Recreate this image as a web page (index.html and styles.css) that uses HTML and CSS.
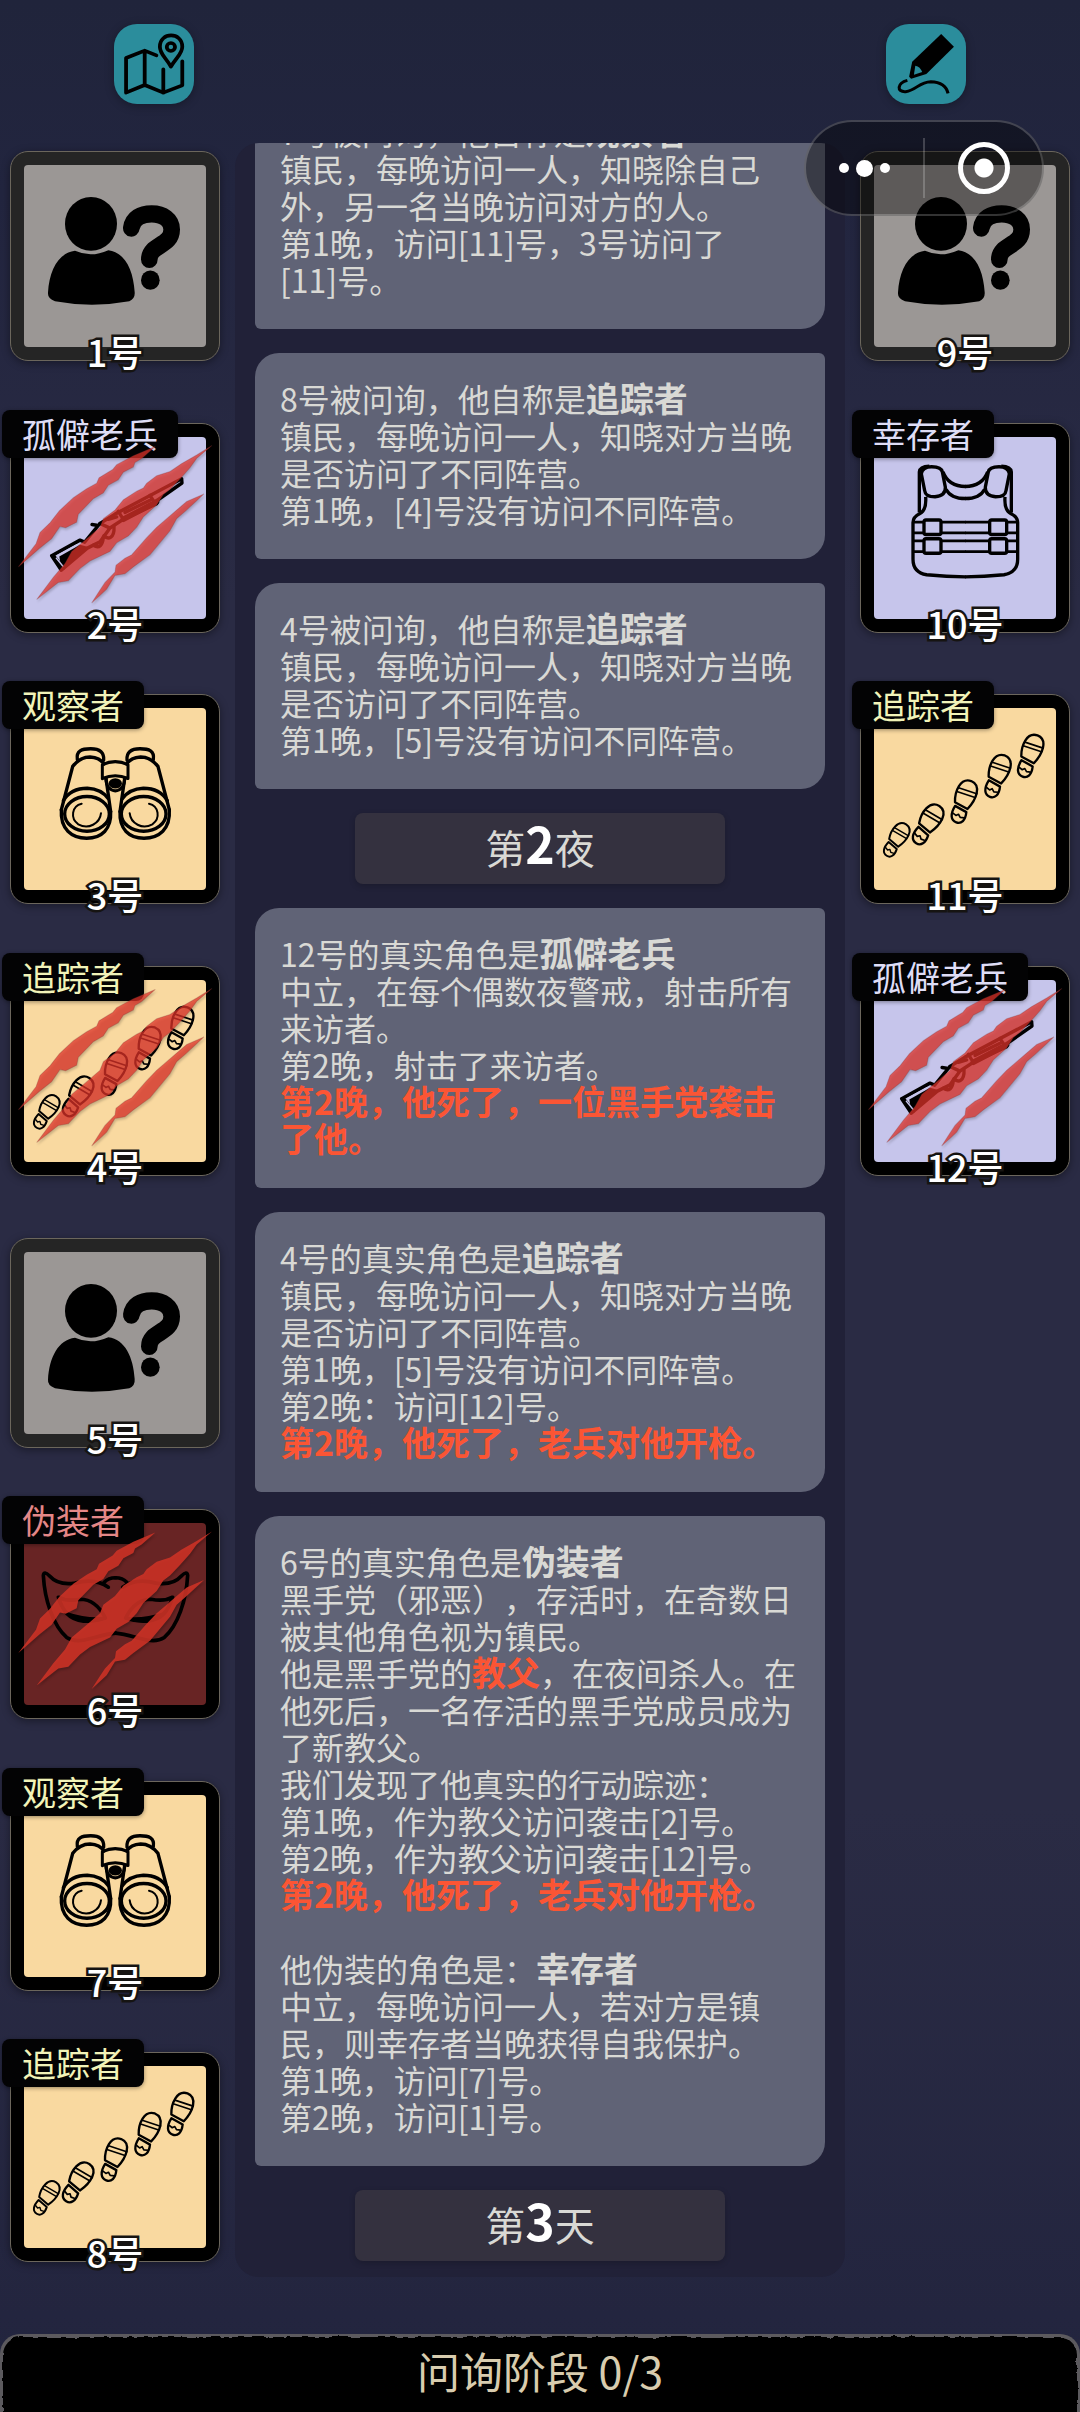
FILE: index.html
```
<!DOCTYPE html>
<html lang="zh-CN">
<head>
  <meta charset="UTF-8">
  <meta name="viewport" content="width=device-width, initial-scale=1.0">
  <title>问询阶段</title>
  <link rel="stylesheet" href="styles.css">
</head>
<body>
  <!-- Shared artwork -->
  <svg class="sprite" width="0" height="0" aria-hidden="true">
    <symbol id="unknown" viewBox="30 835 630 608" preserveAspectRatio="none">
      <circle cx="273" cy="1046" r="78"/>
      <path d="M225 1124C175 1130 148 1180 144 1245Q142 1262 165 1270Q275 1290 388 1270Q406 1262 404 1243C400 1180 375 1128 325 1122Q273 1145 225 1124Z"/>
      <path d="M394 1058C398 1030 422 1017 455 1017C490 1017 515 1035 515 1062C515 1112 448 1105 448 1149" fill="none" stroke="#000" stroke-width="50" stroke-linecap="round"/>
      <circle cx="451" cy="1209" r="28"/>
    </symbol>

    <symbol id="rifle" viewBox="30 67 630 606" preserveAspectRatio="none">
      <g fill="none" stroke="#000" stroke-width="10" stroke-linejoin="round" stroke-linecap="round">
        <path d="M155 450L240 405L254 411L300 357L345 330L545 228L546 240L472 290L470 300L370 345L330 370L300 410L262 428L184 492Z"/>
        <path d="M178 452L240 418L262 424L184 488Z" fill="#000" stroke="none"/>
        <path d="M162 452L190 486M276 360L290 362M300 357L325 368M355 322L370 345M450 276L462 294M325 345L350 338M375 325L450 290"/>
        <path d="M370 345L470 294" stroke-width="16"/>
        <path d="M342 366C344 398 325 406 312 392M310 396C308 420 298 430 280 420"/>
      </g>
      <path d="M172 450L232 418M168 456L190 482" stroke="#c7c5ec" stroke-width="4"/>
    </symbol>

    <symbol id="binoculars" viewBox="30 856 630 606" preserveAspectRatio="none">
      <g id="scope" fill="none" stroke="#000" stroke-width="10" stroke-linecap="round" stroke-linejoin="round">
        <path d="M232 1045C228 1020 245 1014 272 1014C300 1014 313 1025 311 1047"/>
        <path d="M184 1190L218 1065Q240 1038 270 1038Q300 1040 312 1058M318 1100L332 1195"/>
        <path d="M184 1190C180 1246 215 1272 260 1272C305 1272 335 1246 332 1195"/>
        <path d="M190 1164Q212 1128 262 1128Q304 1130 325 1158"/>
        <ellipse cx="261" cy="1202" rx="67" ry="50"/>
        <path d="M245 1173C215 1180 210 1215 235 1232C265 1248 300 1230 303 1200" stroke-width="6"/>
      </g>
      <use href="#scope" transform="translate(692 0) scale(-1 1)"/>
      <g fill="none" stroke="#000" stroke-width="9" stroke-linejoin="round">
        <path d="M307 1060Q346 1042 384 1060V1100Q346 1084 307 1100Z"/>
        <path d="M318 1098C316 1148 376 1148 374 1098"/>
      </g>
      <ellipse cx="346" cy="1114" rx="20" ry="15"/>
    </symbol>

    <symbol id="footprints" viewBox="30 67 630 625" preserveAspectRatio="none">
      <g fill="none" stroke="#000" stroke-width="7" stroke-linejoin="round">
        <g id="step" transform="translate(540 252) rotate(20)">
          <path d="M-24 10C-36 -20 -34 -65 0 -66C34 -65 34 -20 18 16Z"/>
          <path d="M-31 -34L31 -36M-32 -22L30 -24" stroke-width="5"/>
          <path d="M-20 20L18 26C24 50 16 65 0 65C-18 65 -26 48 -20 20Z"/>
          <path d="M-20 42L-8 46L-2 40L6 47L18 44" stroke-width="5"/>
        </g>
        <use href="#step" transform="translate(-98 60)"/>
        <use href="#step" transform="translate(-199 136)"/>
        <use href="#step" transform="rotate(12 233 456) translate(-307 204)"/>
        <use href="#step" transform="translate(139 502) rotate(12) scale(.84) translate(-540 -252)"/>
      </g>
    </symbol>

    <symbol id="vest" viewBox="60 67 630 606" preserveAspectRatio="none">
      <g id="vest-half" fill="none" stroke="#000" stroke-width="10" stroke-linejoin="round">
        <path d="M244 214Q246 193 275 193Q304 193 307 208L316 252Q318 276 285 280Q256 280 254 262Z"/>
        <path d="M238 325V208Q240 193 268 192"/>
        <path d="M309 208Q325 250 377 250M318 258Q332 285 377 285M257 280Q260 318 240 328Q219 338 219 354V460Q219 498 260 505Q320 511 377 511"/>
        <g id="belt">
          <rect x="252" y="347" width="51" height="42" rx="6"/>
          <path d="M219 353H252M219 384H252M303 353H377M303 384H377" stroke-width="8"/>
        </g>
        <use href="#belt" transform="translate(0 54)"/>
      </g>
      <use href="#vest-half" transform="translate(752 0) scale(-1 1)"/>
    </symbol>

    <symbol id="mask" viewBox="30 57 630 626" preserveAspectRatio="none">
      <g id="mask-half" fill="none" stroke="#000" stroke-width="11" stroke-linejoin="round" stroke-linecap="round">
        <path d="M130 255Q132 240 148 256Q175 286 225 278Q285 262 325 290M130 255C134 330 160 405 200 440C240 466 290 430 347 427"/>
        <path d="M312 276Q325 262 347 262M175 320Q200 334 240 326C275 326 300 350 316 382C270 398 225 394 202 370Q184 350 175 320Z"/>
      </g>
      <use href="#mask-half" transform="translate(693 0) scale(-1 1)"/>
      <path d="M202 368C225 394 270 398 316 382Q260 388 202 368ZM491 368C468 394 423 398 377 382Q433 388 491 368Z" stroke="#000" stroke-width="7"/>
    </symbol>

    <symbol id="claws" viewBox="30 47 630 610" preserveAspectRatio="none">
      <path d="M55 465L108 398L120 365L150 337L178 302L220 264L260 238L290 222L297 206L338 182L350 168L400 142L466 115L425 150L405 162L400 175L370 190L355 212L325 228L310 250L280 267L235 312L230 335L197 351L180 348L155 383L120 410Z"/>
      <path d="M110 560L160 495L195 455L215 420L270 375L300 350L310 325L345 300L370 270L410 245L430 236L440 222L470 200L510 188L545 165L590 140L636 112L590 150L570 177L540 210L510 240L490 255L470 285L430 320L410 350L385 375L350 395L330 420L270 448L240 470L205 505L175 510Z"/>
      <path d="M275 570L300 532L315 510L345 480L348 460L375 440L395 430L440 380L470 350L500 325L530 300L560 275L612 253L560 300L530 325L510 360L480 395L450 430L400 465L375 485L345 490L320 530Z"/>
    </symbol>
  </svg>

  <header class="toolbar">
    <button class="tool-btn" type="button" aria-label="地图">
      <svg viewBox="331 72 232 240" preserveAspectRatio="none">
        <g fill="none" stroke="#000" stroke-width="11" stroke-linejoin="round" stroke-linecap="round">
          <path d="M454 166L420 152L366 174V278L420 255L474 278L529 256V184M420 152V255M474 208V278"/>
          <path d="M496 200C481 172 464 162 464 140C464 95 529 95 529 140C529 162 511 172 496 200Z"/>
          <circle cx="496" cy="141" r="12"/>
        </g>
      </svg>
    </button>
    <button class="tool-btn" type="button" aria-label="笔记">
      <svg viewBox="1005 72 232 240" preserveAspectRatio="none">
        <path d="M1165 102L1202 140L1122 222L1078 236L1072 230L1081 185Z"/>
        <path d="M1090 197C1100 198 1106 206 1110 216L1086 224Z" fill="#2b8d9c"/>
        <path d="M1067 241C1037 249 1035 277 1062 275C1095 270 1100 246 1135 245C1162 246 1180 258 1185 280" fill="none" stroke="#000" stroke-width="9"/>
      </svg>
    </button>
  </header>

  <div class="capsule">
    <button type="button" class="capsule-btn" aria-label="更多">
      <span class="dot"></span><span class="dot big"></span><span class="dot"></span>
    </button>
    <button type="button" class="capsule-btn close" aria-label="关闭">
      <span class="ring"></span>
    </button>
  </div>

  <main class="board">
    <ul class="players left">
      <li>
        <button type="button" class="tile unknown">
          <svg class="art"><use href="#unknown"/></svg>
          <span class="seat">1号</span>
        </button>
      </li>
      <li>
        <button type="button" class="tile neutral">
          <svg class="art"><use href="#rifle"/></svg>
          <span class="role">孤僻老兵</span>
          <svg class="art claws"><use href="#claws"/></svg>
          <span class="seat">2号</span>
        </button>
      </li>
      <li>
        <button type="button" class="tile town">
          <svg class="art"><use href="#binoculars"/></svg>
          <span class="role">观察者</span>
          <span class="seat">3号</span>
        </button>
      </li>
      <li>
        <button type="button" class="tile town">
          <svg class="art"><use href="#footprints"/></svg>
          <span class="role">追踪者</span>
          <svg class="art claws"><use href="#claws"/></svg>
          <span class="seat">4号</span>
        </button>
      </li>
      <li>
        <button type="button" class="tile unknown">
          <svg class="art"><use href="#unknown"/></svg>
          <span class="seat">5号</span>
        </button>
      </li>
      <li>
        <button type="button" class="tile mafia">
          <svg class="art"><use href="#mask"/></svg>
          <span class="role">伪装者</span>
          <svg class="art claws"><use href="#claws"/></svg>
          <span class="seat">6号</span>
        </button>
      </li>
      <li>
        <button type="button" class="tile town">
          <svg class="art"><use href="#binoculars"/></svg>
          <span class="role">观察者</span>
          <span class="seat">7号</span>
        </button>
      </li>
      <li>
        <button type="button" class="tile town">
          <svg class="art"><use href="#footprints"/></svg>
          <span class="role">追踪者</span>
          <span class="seat">8号</span>
        </button>
      </li>
    </ul>

    <!-- Event log, newest entry at the bottom -->
    <section class="log">
      <p class="entry">
        7号被问询，他自称是<b>观察者</b><br>
        镇民，每晚访问一人，知晓除自己外，另一名当晚访问对方的人。<br>
        第1晚，访问[11]号，3号访问了<br>[11]号。
      </p>
      <p class="entry">
        8号被问询，他自称是<b>追踪者</b><br>
        镇民，每晚访问一人，知晓对方当晚是否访问了不同阵营。<br>
        第1晚，[4]号没有访问不同阵营。
      </p>
      <p class="entry">
        4号被问询，他自称是<b>追踪者</b><br>
        镇民，每晚访问一人，知晓对方当晚是否访问了不同阵营。<br>
        第1晚，[5]号没有访问不同阵营。
      </p>
      <h2 class="phase">第<b>2</b>夜</h2>
      <p class="entry">
        12号的真实角色是<b>孤僻老兵</b><br>
        中立，在每个偶数夜警戒，射击所有来访者。<br>
        第2晚，射击了来访者。<br>
        <b class="alert">第2晚，他死了，一位黑手党袭击了他。</b>
      </p>
      <p class="entry">
        4号的真实角色是<b>追踪者</b><br>
        镇民，每晚访问一人，知晓对方当晚是否访问了不同阵营。<br>
        第1晚，[5]号没有访问不同阵营。<br>
        第2晚：访问[12]号。<br>
        <b class="alert">第2晚，他死了，老兵对他开枪。</b>
      </p>
      <p class="entry">
        6号的真实角色是<b>伪装者</b><br>
        黑手党（邪恶），存活时，在奇数日被其他角色视为镇民。<br>
        他是黑手党的<b class="alert">教父</b>，在夜间杀人。在他死后，一名存活的黑手党成员成为了新教父。<br>
        我们发现了他真实的行动踪迹：<br>
        第1晚，作为教父访问袭击[2]号。<br>
        第2晚，作为教父访问袭击[12]号。<br>
        <b class="alert">第2晚，他死了，老兵对他开枪。</b><br>
        <br>
        他伪装的角色是：<b>幸存者</b><br>
        中立，每晚访问一人，若对方是镇民，则幸存者当晚获得自我保护。<br>
        第1晚，访问[7]号。<br>
        第2晚，访问[1]号。
      </p>
      <h2 class="phase">第<b>3</b>天</h2>
    </section>

    <ul class="players right">
      <li>
        <button type="button" class="tile unknown">
          <svg class="art"><use href="#unknown"/></svg>
          <span class="seat">9号</span>
        </button>
      </li>
      <li>
        <button type="button" class="tile neutral">
          <svg class="art"><use href="#vest"/></svg>
          <span class="role">幸存者</span>
          <span class="seat">10号</span>
        </button>
      </li>
      <li>
        <button type="button" class="tile town">
          <svg class="art"><use href="#footprints"/></svg>
          <span class="role">追踪者</span>
          <span class="seat">11号</span>
        </button>
      </li>
      <li>
        <button type="button" class="tile neutral">
          <svg class="art"><use href="#rifle"/></svg>
          <span class="role">孤僻老兵</span>
          <svg class="art claws"><use href="#claws"/></svg>
          <span class="seat">12号</span>
        </button>
      </li>
    </ul>
  </main>

  <footer class="stage">
    <svg class="stage-edge" aria-hidden="true">
      <defs>
        <filter id="rough" x="-5%" y="-20%" width="110%" height="140%">
          <feTurbulence type="fractalNoise" baseFrequency="0.12" numOctaves="2" seed="4"/>
          <feDisplacementMap in="SourceGraphic" scale="5"/>
        </filter>
      </defs>
      <rect x="3" y="3" width="100%" height="200" rx="18" filter="url(#rough)"/>
    </svg>
    <span class="stage-text">问询阶段 0/3</span>
  </footer>
</body>
</html>
```
FILE: styles.css
```
:root {
  --teal: #2b8d9c;
  --panel: #212138;
  --card: #606376;
  --text: #d9d9d5;
  --alert: #fb5534;
}

* {
  box-sizing: border-box;
}

body {
  margin: 0;
  height: 100vh;
  display: flex;
  flex-direction: column;
  overflow: hidden;
  position: relative;
  background: linear-gradient(#20243b 0, #22253f 8%, #2a2b44 25%, #2a2b44 75%, #23253f 96%, #22243c 100%);
  color: var(--text);
  font-family: "Noto Sans CJK SC", sans-serif;
  text-spacing-trim: space-all;
}

button {
  font: inherit;
  color: inherit;
  border: none;
  padding: 0;
  cursor: pointer;
}

.sprite {
  position: absolute;
}

/* Top buttons */
.toolbar {
  display: flex;
  justify-content: space-between;
  padding: 24px 114px 39px;
}

.tool-btn {
  width: 80px;
  height: 80px;
  border-radius: 23px;
  background: var(--teal);
  box-shadow: 0 2px 10px rgba(0, 0, 0, 0.3);
}

.tool-btn svg {
  display: block;
  width: 100%;
  height: 100%;
}

.capsule {
  position: absolute;
  top: 120px;
  right: 36px;
  z-index: 10;
  width: 240px;
  height: 96px;
  padding: 16px 0;
  display: flex;
  border: 2px solid rgba(255, 255, 255, 0.2);
  border-radius: 48px;
  background: rgba(0, 0, 0, 0.4);
}

.capsule-btn {
  flex: 1;
  display: flex;
  align-items: center;
  justify-content: center;
  gap: 7px;
  background: none;
}

.capsule-btn.close {
  border-left: 2px solid rgba(255, 255, 255, 0.2);
}

.dot {
  width: 10px;
  height: 10px;
  border-radius: 50%;
  background: #fff;
}

.dot.big {
  width: 17px;
  height: 17px;
}

.ring {
  width: 52px;
  height: 52px;
  border: 5px solid #fff;
  border-radius: 50%;
  background: radial-gradient(circle, #fff 9px, transparent 10px);
}

/* Board */
.board {
  flex: 1;
  min-height: 0;
  display: grid;
  grid-template-columns: 235fr 610fr 235fr;
}

.players {
  list-style: none;
  margin: 0;
  display: grid;
  grid-template-rows: repeat(8, minmax(0, 1fr));
}

.players.left {
  padding: 8px 15px 10px 10px;
}

.players.right {
  padding: 8px 10px 10px 15px;
}

.tile {
  position: relative;
  display: block;
  width: 100%;
  aspect-ratio: 1;
  padding: 13px;
  border: 1px solid #6b665c;
  border-radius: 18px;
  background: #000;
  box-shadow: 0 2px 8px rgba(0, 0, 0, 0.4);
}

.tile::before {
  content: "";
  display: block;
  height: 100%;
  border-radius: 4px;
  background: var(--face);
}

.tile.unknown {
  --face: #9b9795;
  background: #252525;
}

.tile.town {
  --face: #f9d9a0;
  --role: #f1f3b8;
}

.tile.neutral {
  --face: #c6c5eb;
  --role: #deddf6;
}

.tile.mafia {
  --face: #682424;
  --role: #e48787;
}

.art {
  position: absolute;
  top: -1px;
  left: -1px;
  width: calc(100% + 2px);
  height: calc(100% + 2px);
}

.claws {
  fill: rgba(222, 50, 40, 0.74);
  stroke: rgba(110, 50, 50, 0.25);
  stroke-width: 3px;
  filter: drop-shadow(1px 2px 1px rgba(0, 0, 0, 0.25));
}

.mafia .claws {
  fill: rgba(206, 50, 38, 0.88);
  stroke: none;
}

.role {
  position: absolute;
  top: -14px;
  left: -9px;
  padding: 0 20px;
  border-radius: 8px;
  background: #030304;
  box-shadow: 0 1px 4px rgba(0, 0, 0, 0.4);
  color: var(--role);
  font-size: 34px;
  line-height: 48px;
  white-space: nowrap;
}

.seat {
  position: absolute;
  left: 0;
  right: 0;
  bottom: -11px;
  color: #fff;
  font-size: 36px;
  font-weight: 500;
  line-height: 40px;
  text-align: center;
  -webkit-text-stroke: 5px #161412;
  paint-order: stroke fill;
}

/* Event log */
.log {
  display: flex;
  flex-direction: column;
  justify-content: flex-end;
  align-items: stretch;
  gap: 24px;
  margin-bottom: 57px;
  padding: 0 20px 16px;
  min-height: 0;
  overflow: hidden;
  border-radius: 24px;
  background: var(--panel);
}

.entry {
  flex: none;
  margin: 0;
  padding: 27px 25px 31px;
  border-radius: 24px 6px 24px 6px;
  background: var(--card);
  font-size: 32px;
  line-height: 37px;
}

.entry b {
  font-size: 34px;
  line-height: 34px;
}

.entry .alert {
  color: var(--alert);
}

.phase {
  flex: none;
  align-self: center;
  width: 370px;
  height: 71px;
  margin: 0;
  border-radius: 8px;
  background: #34313f;
  box-shadow: 0 2px 6px rgba(0, 0, 0, 0.2);
  font-size: 40px;
  font-weight: 400;
  line-height: 68px;
  text-align: center;
}

.phase b {
  color: #fff;
  font-size: 50px;
  line-height: 50px;
}

/* Bottom bar */
.stage {
  position: relative;
  height: 78px;
  padding-bottom: 6px;
  display: flex;
  align-items: center;
  justify-content: center;
  overflow: hidden;
  border-radius: 20px 20px 0 0;
  background: #5c5a5e;
}

.stage-edge {
  position: absolute;
  top: 0;
  left: 0;
  width: calc(100% - 6px);
  height: 100%;
  fill: #030203;
  overflow: visible;
}

.stage-text {
  position: relative;
  color: #d8ccae;
  font-size: 43px;
  line-height: 48px;
}
```
